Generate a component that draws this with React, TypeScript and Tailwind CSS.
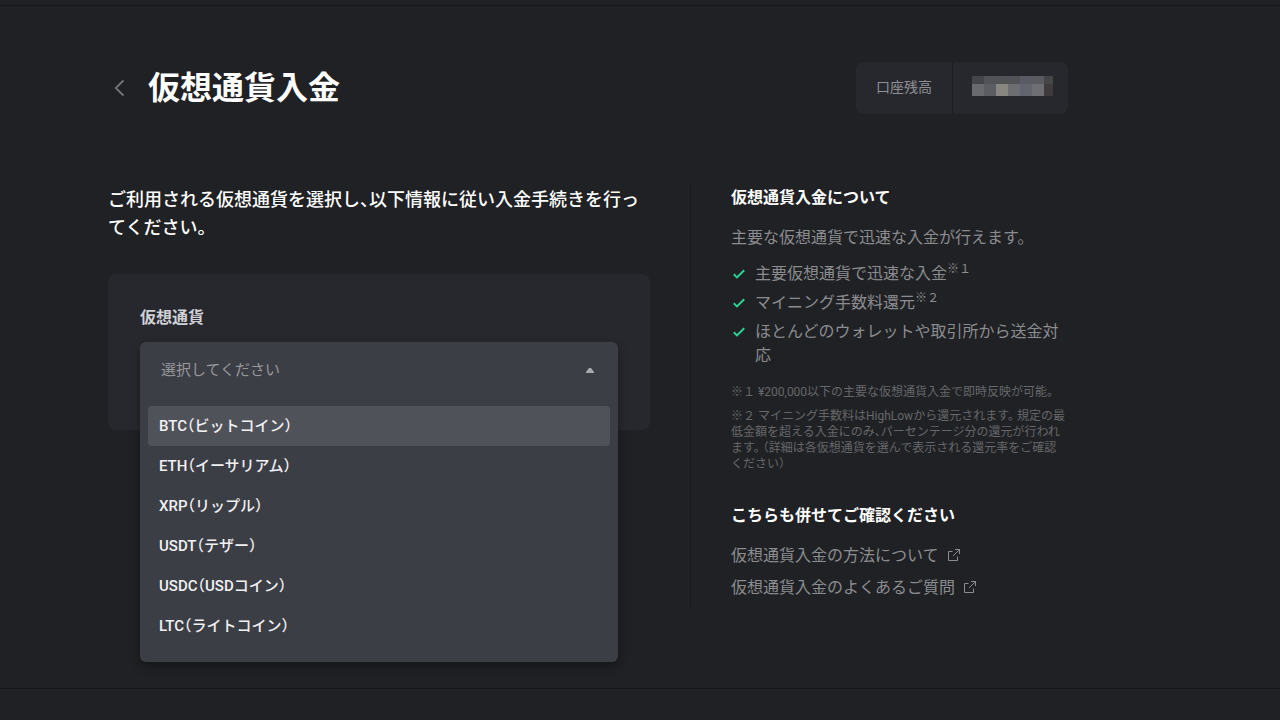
import React, { useState } from 'react'

const currencies = [
  { code: 'BTC', label: 'BTC（ビットコイン）' },
  { code: 'ETH', label: 'ETH（イーサリアム）' },
  { code: 'XRP', label: 'XRP（リップル）' },
  { code: 'USDT', label: 'USDT（テザー）' },
  { code: 'USDC', label: 'USDC（USDコイン）' },
  { code: 'LTC', label: 'LTC（ライトコイン）' },
]

const features = [
  { text: '主要仮想通貨で迅速な入金', note: '※１' },
  { text: 'マイニング手数料還元', note: '※２' },
  { text: 'ほとんどのウォレットや取引所から送金対応', note: '' },
]

const links = ['仮想通貨入金の方法について', '仮想通貨入金のよくあるご質問']

const maskTop = ['#44454a', '#525357', '#515256', '#525357', '#595a64', '#5a5b60', '#464649']
const maskBottom = ['#696a6e', '#5b5d63', '#888681', '#6c6e71', '#62646e', '#6d6f72', '#3f3a3c']

const BackIcon: React.FC = () => (
  <svg width="12" height="18" viewBox="0 0 12 18" fill="none" stroke="#737478" strokeWidth="1.8">
    <path d="M10.4 1.5 2.8 9l7.6 7.5" />
  </svg>
)

const CheckIcon: React.FC = () => (
  <svg className="mt-1.5 shrink-0" width="16" height="12" viewBox="0 0 16 12" fill="none" stroke="#2bd394" strokeWidth="2">
    <path d="M2.8 6.2 6 9.4l7.2-7.2" />
  </svg>
)

const ExternalIcon: React.FC = () => (
  <svg width="14" height="14" viewBox="0 0 14 14" fill="none" stroke="#8b8c90" strokeWidth="1">
    <path d="M5.5 2.5h-4v9h9v-4M8 .5h4.5V5M12.5.5 6 7" />
  </svg>
)

// hidden amount, shown as a pixel mosaic
const MaskedBalance: React.FC = () => (
  <svg width="81" height="20" viewBox="0 0 81 20" shapeRendering="crispEdges" role="img" aria-hidden="true">
    {maskTop.map((c, i) => (
      <rect key={i} x={i * 12} y="0" width="12" height="8" fill={c} />
    ))}
    {maskBottom.map((c, i) => (
      <rect key={i} x={i * 12} y="8" width="12" height="12" fill={c} />
    ))}
  </svg>
)

const CurrencySelect: React.FC = () => {
  const [open, setOpen] = useState(true)
  const [value, setValue] = useState('')
  const [active, setActive] = useState('BTC')

  const choose = (code: string) => {
    setValue(code)
    setOpen(false)
  }

  return (
    <div className="relative h-14">
      <div className={open ? 'absolute inset-x-0 top-0 z-10 rounded-md bg-[#3c3e45] shadow-[0_4px_10px_rgba(0,0,0,0.35)]' : 'rounded-md bg-[#3c3e45]'}>
        <div className="relative">
          <select
            id="currency"
            className="block w-full h-14 appearance-none bg-transparent px-[21px] text-[15px] text-[#97989c] outline-none"
            value={value}
            onChange={(e) => choose(e.target.value)}
            onMouseDown={(e) => {
              e.preventDefault()
              setOpen(!open)
            }}
          >
            <option value="">選択してください</option>
            {currencies.map((c) => (
              <option key={c.code} value={c.code}>{c.label}</option>
            ))}
          </select>
          <svg className="pointer-events-none absolute right-6 top-[26px]" width="8" height="5" viewBox="0 0 8 5" fill="#a9aaae">
            <path d="M3 0h2l3 4v1H0V4z" />
          </svg>
        </div>
        {open && (
          <ul className="px-2 pt-2 pb-4">
            {currencies.map((c) => (
              <li key={c.code}>
                <button
                  type="button"
                  className={`block w-full h-10 rounded-sm px-[11px] text-left text-[15px] font-medium text-[#f1f1f3] ${active === c.code ? 'bg-[#50525a]' : ''}`}
                  onMouseEnter={() => setActive(c.code)}
                  onClick={() => choose(c.code)}
                >
                  {c.label}
                </button>
              </li>
            ))}
          </ul>
        )}
      </div>
    </div>
  )
}

const App: React.FC = () => {
  return (
    <div
      lang="ja"
      className="min-h-screen bg-[#202124] pt-[5px] text-white font-[Roboto,'Noto_Sans_CJK_JP',sans-serif] [font-feature-settings:'halt']"
    >
      <main className="border-y border-[#17181b] pt-14 pb-20">
        <div className="ml-27 mr-8 max-w-240">
          <header className="flex items-center justify-between">
            <div className="flex items-center">
              <button type="button" aria-label="戻る" className="flex w-10 pl-[5px]">
                <BackIcon />
              </button>
              <h1 className="text-[32px] leading-12 font-bold">仮想通貨入金</h1>
            </div>
            <div className="flex h-13 items-stretch rounded-lg bg-[#27282d]">
              <div className="flex items-center border-r border-[#1c1d20] px-5 pb-0.5 text-sm text-[#8e8f93]">口座残高</div>
              <div className="flex items-center pl-[19px] pr-[15px] pb-1">
                <MaskedBalance />
              </div>
            </div>
          </header>

          <div className="mt-18 flex">
            <section className="flex-1">
              <p className="text-lg leading-7 font-medium">
                ご利用される仮想通貨を選択し、以下情報に従い入金手続きを行ってください。
              </p>
              <div className="mt-8 rounded-lg bg-[#27282d] p-8">
                <label htmlFor="currency" className="mb-3 block leading-6 font-bold text-[#d0d1d6]">仮想通貨</label>
                <CurrencySelect />
              </div>
            </section>

            <aside className="ml-10 w-[378px] border-l border-[#18191c] pl-10 pb-2">
              <h2 className="leading-6 font-bold">仮想通貨入金について</h2>
              <p className="mt-4 leading-6 text-[#8b8c90]">主要な仮想通貨で迅速な入金が行えます。</p>
              <ul className="mt-3 space-y-[5px] text-[#8b8c90]">
                {features.map((f) => (
                  <li key={f.text} className="flex gap-2 leading-6">
                    <CheckIcon />
                    <span>
                      {f.text}
                      {f.note && <sup className="text-xs">{f.note}</sup>}
                    </span>
                  </li>
                ))}
              </ul>
              <div className="mt-4 space-y-2 text-xs leading-4 text-[#66676b]">
                <p>※１ ¥200,000以下の主要な仮想通貨入金で即時反映が可能。</p>
                <p>
                  ※２ マイニング手数料はHighLowから還元されます。 規定の最低金額を超える入金にのみ、パーセンテージ分の還元が行われます。 （詳細は各仮想通貨を選んで表示される還元率をご確認ください）
                </p>
              </div>
              <h2 className="mt-8 leading-6 font-bold">こちらも併せてご確認ください</h2>
              <ul className="mt-4 space-y-2 text-[#8b8c90]">
                {links.map((text) => (
                  <li key={text} className="leading-6">
                    <a href="#" className="inline-flex items-center gap-2">
                      {text}
                      <ExternalIcon />
                    </a>
                  </li>
                ))}
              </ul>
            </aside>
          </div>
        </div>
      </main>
    </div>
  )
}

export default App
